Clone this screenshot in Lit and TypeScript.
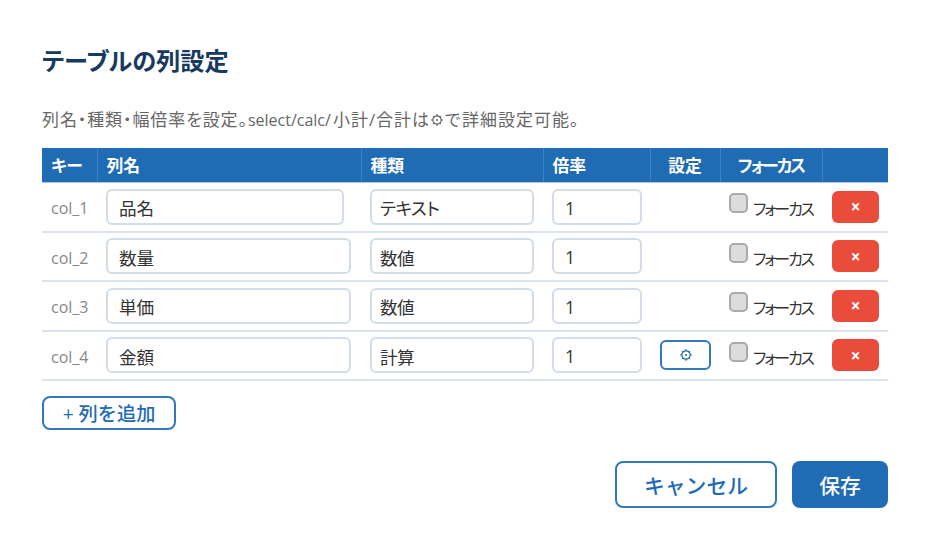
import { LitElement, html, css } from "lit";
import { customElement } from "lit/decorators.js";

const rows = [
  { key: "col_1", name: "品名", type: "テキスト", gear: false, cls: "short" },
  { key: "col_2", name: "数量", type: "数値", gear: false, cls: "" },
  { key: "col_3", name: "単価", type: "数値", gear: false, cls: "" },
  { key: "col_4", name: "金額", type: "計算", gear: true, cls: "" },
];

const gear = (size: number) => html`<svg class="gear" width=${size} height=${size} viewBox="0 0 14 14" fill="none" stroke="currentColor">
  <circle cx="7" cy="7" r="4.2" stroke-width="1.2"></circle>
  <circle cx="7" cy="7" r="1" fill="currentColor" stroke="none"></circle>
  <path d="M7 1V2.8M7 11.2V13M1 7H2.8M11.2 7H13M2.8 2.8L4 4M10 10L11.2 11.2M2.8 11.2L4 10M10 4L11.2 2.8" stroke-width="1"></path>
</svg>`;

@customElement("app-root")
export class AppRoot extends LitElement {
  static styles = css`
    :host {
      display: block;
      width: 930px;
      height: 550px;
      background: #fff;
      box-sizing: border-box;
      padding: 43px 42px 0;
      font-family: "Open Sans", "Noto Sans CJK JP", sans-serif;
      color: #222;
      font-feature-settings: "palt";
    }
    h2 {
      margin: 0;
      font-size: 24.2px;
      line-height: 36px;
      font-weight: 700;
      color: #173a5e;
    }
    .desc {
      margin: 29px 0 0;
      font-size: 17px;
      line-height: 24px;
      color: #666;
      display: flex;
      align-items: center;
      white-space: pre;
    }
    .desc .lead { letter-spacing: 0.9px; }
    .desc .latin { font-size: 16px; }
    .desc .mid { margin-left: 2px; letter-spacing: 1px; }
    .desc .tail { font-feature-settings: normal; letter-spacing: 1px; }
    .desc .gear { color: #666; flex: none; }
    table {
      margin-top: 16px;
      width: 846px;
      table-layout: fixed;
      border-collapse: collapse;
    }
    th {
      background: #1f6cb5;
      color: #fff;
      font-size: 16.8px;
      font-weight: 700;
      text-align: left;
      height: 34px;
      padding: 0 9px;
      border-left: 1px solid #3d80bf;
      border-bottom: 1px solid #a9c6e2;
      box-sizing: border-box;
    }
    th:first-child { border-left: none; }
    th.c { text-align: center; }
    th.tight { letter-spacing: -2px; }
    td {
      height: 49.5px;
      padding: 0 9px;
      box-sizing: border-box;
      border-bottom: 2px solid #dbe4ee;
      vertical-align: middle;
    }
    .key { color: #888; font-size: 16px; padding-top: 3px; }
    input[type="text"] {
      display: block;
      box-sizing: border-box;
      height: 36px;
      border: 2px solid #d2dde9;
      border-radius: 6px;
      background: #fff;
      font: inherit;
      font-size: 17.6px;
      font-feature-settings: "palt";
      color: #333;
      outline: none;
      padding-top: 3px;
    }
    .name { width: 245px; padding-left: 11px; padding-right: 11px; }
    .name.short { width: 238px; }
    .type { width: 164px; padding-left: 8px; padding-right: 8px; letter-spacing: -0.5px; }
    .rate { width: 90px; padding-left: 11px; padding-right: 11px; }
    .set {
      display: flex;
      align-items: center;
      justify-content: center;
      width: 51px;
      height: 30px;
      margin-left: 1px;
      box-sizing: border-box;
      padding: 0;
      background: #fff;
      border: 2px solid #3079bc;
      border-radius: 6px;
      color: #1f6cb5;
    }
    label {
      display: flex;
      align-items: flex-start;
      font-size: 16px;
      color: #333;
      white-space: nowrap;
      letter-spacing: -2.2px;
    }
    .cb {
      appearance: none;
      flex: none;
      width: 19px;
      height: 20px;
      margin: 0 5px 0 0;
      box-sizing: border-box;
      background: #dcdcdc;
      border: 2px solid #aaa;
      border-radius: 5px;
    }
    label span { margin-top: 3px; }
    .del {
      display: flex;
      align-items: center;
      justify-content: center;
      width: 47px;
      height: 32px;
      margin-left: 1px;
      padding: 0;
      background: #ea4c3c;
      border: none;
      border-radius: 6px;
      color: #fff;
      font: inherit;
      font-size: 17px;
      font-weight: 700;
    }
    .add {
      display: block;
      margin-top: 15px;
      width: 134px;
      height: 34px;
      padding: 0;
      background: #fff;
      border: 2px solid #3079bc;
      border-radius: 8px;
      color: #1f6cb5;
      font: inherit;
      font-size: 19.2px;
      font-weight: 500;
      font-feature-settings: normal;
    }
    .actions {
      display: flex;
      justify-content: flex-end;
      gap: 15px;
      margin-top: 31px;
    }
    .actions button {
      height: 47px;
      border-radius: 8px;
      font: inherit;
      font-size: 20.8px;
      font-weight: 500;
      font-feature-settings: normal;
      padding: 0;
    }
    .cancel { width: 162px; background: #fff; border: 2px solid #3079bc; color: #1f6cb5; }
    .save { width: 96px; background: #1f6cb5; border: none; color: #fff; }
  `;

  render() {
    return html`
      <h2>テーブルの列設定</h2>
      <p class="desc"><span class="lead">列名・種類・幅倍率を設定。</span><span class="latin">select/calc/</span><span class="mid">小計/合計は</span>${gear(14)}<span class="tail">で詳細設定可能。</span></p>
      <table>
        <colgroup>
          <col style="width:55px" /><col style="width:264px" /><col style="width:182px" /><col style="width:107px" />
          <col style="width:70px" /><col style="width:102px" /><col style="width:66px" />
        </colgroup>
        <thead>
          <tr>
            <th>キー</th><th>列名</th><th>種類</th><th>倍率</th>
            <th class="c">設定</th><th class="c tight">フォーカス</th><th></th>
          </tr>
        </thead>
        <tbody>
          ${rows.map(
            (r) => html`<tr>
              <td class="key">${r.key}</td>
              <td><input type="text" class="name ${r.cls}" .value=${r.name} /></td>
              <td><input type="text" class="type" .value=${r.type} /></td>
              <td><input type="text" class="rate" .value=${"1"} /></td>
              <td>${r.gear ? html`<button class="set">${gear(14)}</button>` : ""}</td>
              <td><label><input type="checkbox" class="cb" /><span>フォーカス</span></label></td>
              <td><button class="del">×</button></td>
            </tr>`
          )}
        </tbody>
      </table>
      <button class="add">+ 列を追加</button>
      <div class="actions">
        <button class="cancel">キャンセル</button>
        <button class="save">保存</button>
      </div>
    `;
  }
}
